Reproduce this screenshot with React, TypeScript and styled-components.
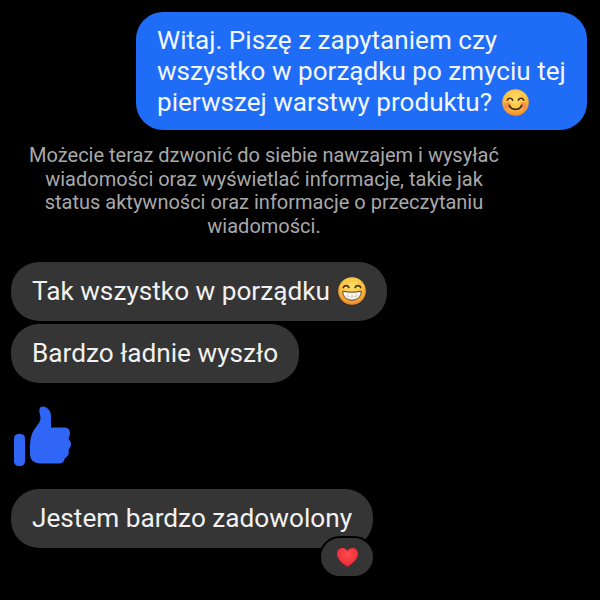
import React from 'react'
import styled, { createGlobalStyle } from 'styled-components'

const GlobalStyle = createGlobalStyle`
  html, body {
    margin: 0;
    padding: 0;
    background: #000;
  }
`

const Screen = styled.div`
  width: 600px;
  height: 600px;
  box-sizing: border-box;
  padding: 12px 13px 0 11px;
  background: #000;
  overflow: hidden;
  display: flex;
  flex-direction: column;
  align-items: flex-start;
  font-family: Roboto, "Noto Sans", sans-serif;
`

const OutgoingBubble = styled.div`
  align-self: flex-end;
  width: 451px;
  height: 118px;
  box-sizing: border-box;
  padding: 13px 0 0 21px;
  border-radius: 27px;
  background: #1f6cf6;
  color: #f2f6ff;
  font-size: 26.1px;
  line-height: 31px;
  white-space: nowrap;
`

const Notice = styled.div`
  width: 506px;
  margin: 14px 0 0 0;
  color: #a9a9a9;
  font-size: 20px;
  line-height: 23.5px;
  text-align: center;
  white-space: nowrap;
`

const IncomingBubble = styled.div<{ $width: number; $top: number }>`
  position: relative;
  width: ${({ $width }) => $width}px;
  height: 59px;
  margin-top: ${({ $top }) => $top}px;
  box-sizing: border-box;
  padding: 0 0 1px 21px;
  border-radius: 28px;
  background: #353535;
  color: #f1f1f1;
  font-size: 26.2px;
  display: flex;
  align-items: center;
  gap: 8px;
  white-space: nowrap;
`

const LikeRow = styled.div`
  margin-top: 23px;
  height: 61px;
  display: flex;
  align-items: flex-start;
`

const Reaction = styled.div`
  position: absolute;
  right: -2px;
  bottom: -30px;
  width: 56px;
  height: 42px;
  box-sizing: border-box;
  border: 2px solid #000;
  border-radius: 21px;
  background: #353535;
  display: flex;
  align-items: center;
  justify-content: center;
`

const InlineEmoji = styled.svg`
  flex: none;
`

const SmileSvg = styled(InlineEmoji)`
  margin-left: 3px;
  vertical-align: -5px;
`

const FaceGradient = ({ id }: { id: string }) => (
  <defs>
    <radialGradient id={id} cx="50%" cy="36%" r="66%">
      <stop offset="0%" stopColor="#ffdf6a" />
      <stop offset="60%" stopColor="#fcc13f" />
      <stop offset="100%" stopColor="#ee7f28" />
    </radialGradient>
  </defs>
)

const SmileEmoji = () => (
  <SmileSvg width="27" height="27" viewBox="0 0 28 28">
    <FaceGradient id="smileFace" />
    <circle cx="14" cy="14" r="13.8" fill="url(#smileFace)" />
    <circle cx="5.800" cy="17" r="3.400" fill="#f27a55" opacity="0.6" />
    <circle cx="22.200" cy="17" r="3.400" fill="#f27a55" opacity="0.6" />
    <path d="M5.500 11.500c1-2.600 4.600-2.600 5.600 0" fill="none" stroke="#4a2f1c" strokeWidth="1.700" strokeLinecap="round" />
    <path d="M16.900 11.500c1-2.600 4.600-2.600 5.600 0" fill="none" stroke="#4a2f1c" strokeWidth="1.700" strokeLinecap="round" />
    <path d="M7.500 17c2.500 5.600 10.500 5.600 13 0" fill="none" stroke="#4a2f1c" strokeWidth="1.800" strokeLinecap="round" />
  </SmileSvg>
)

const GrinEmoji = () => (
  <InlineEmoji width="28" height="28" viewBox="0 0 28 28">
    <FaceGradient id="grinFace" />
    <circle cx="14" cy="14" r="13.800" fill="url(#grinFace)" />
    <path d="M5.300 10.500c1-2.600 4.600-2.600 5.600 0" fill="none" stroke="#4a2f1c" strokeWidth="1.700" strokeLinecap="round" />
    <path d="M17.100 10.500c1-2.600 4.600-2.600 5.600 0" fill="none" stroke="#4a2f1c" strokeWidth="1.700" strokeLinecap="round" />
    <path d="M4.800 14.200c5.500 1.300 12.900 1.300 18.400 0 .4 5-3.600 9-9.200 9s-9.600-4-9.200-9z" fill="#fbfbf6" stroke="#5b3a20" strokeWidth="1" />
    <path d="M5.600 18.600c5 1 11.800 1 16.800 0M10 15.400v7M14 15.600v7.600M18 15.400v7" fill="none" stroke="#c4bdaf" strokeWidth="0.600" />
  </InlineEmoji>
)

const ThumbIcon = () => (
  <svg width="60" height="61" viewBox="0 0 60 61">
    <rect x="3" y="28" width="11" height="32" rx="4.500" fill="#2f66f5" />
    <path
      d="M19 40C19 32 21 26 25 21C28 17 29.500 15 29.500 12C29.500 9 28 7 28.300 4C28.600 1 31 0 33.500 .7C37 1.700 40 5.500 40 10V21.500H53C56.500 21.500 59 23.500 59 27C59 29.500 58 31.500 57.500 33C59 34.500 60 36 60 38C60 40.500 58.500 42.500 57.500 44C58 46 58 48.500 56.500 50C55 51.500 54 52 53.500 53C53 56 51 57.500 48 57.500H31C26 57.500 22 56 20.500 53.500C19.300 51.500 19 49.500 19 47Z"
      fill="#2f66f5"
    />
  </svg>
)

const HeartIcon = () => (
  <svg width="23" height="21" viewBox="0 0 24 22">
    <defs>
      <radialGradient id="heartFill" cx="50%" cy="35%" r="70%">
        <stop offset="0%" stopColor="#ff4d50" />
        <stop offset="70%" stopColor="#f0303a" />
        <stop offset="100%" stopColor="#c9182a" />
      </radialGradient>
    </defs>
    <path
      d="M12 21C8.500 18.400 1 13.200 1 7c0-3.500 2.600-6 5.800-6C9 1 11 2.200 12 4.200 13 2.200 15 1 17.200 1 20.400 1 23 3.500 23 7c0 6.200-7.500 11.400-11 14z"
      fill="url(#heartFill)"
    />
  </svg>
)

const App = () => (
  <Screen>
    <GlobalStyle />
    <OutgoingBubble>
      Witaj. Piszę z zapytaniem czy
      <br />
      wszystko w porządku po zmyciu tej
      <br />
      pierwszej warstwy produktu? <SmileEmoji />
    </OutgoingBubble>
    <Notice>
      Możecie teraz dzwonić do siebie nawzajem i wysyłać
      <br />
      wiadomości oraz wyświetlać informacje, takie jak
      <br />
      status aktywności oraz informacje o przeczytaniu
      <br />
      wiadomości.
    </Notice>
    <IncomingBubble $width={376} $top={24}>
      Tak wszystko w porządku <GrinEmoji />
    </IncomingBubble>
    <IncomingBubble $width={288} $top={3}>
      Bardzo ładnie wyszło
    </IncomingBubble>
    <LikeRow>
      <ThumbIcon />
    </LikeRow>
    <IncomingBubble $width={362} $top={22}>
      Jestem bardzo zadowolony
      <Reaction>
        <HeartIcon />
      </Reaction>
    </IncomingBubble>
  </Screen>
)

export default App
